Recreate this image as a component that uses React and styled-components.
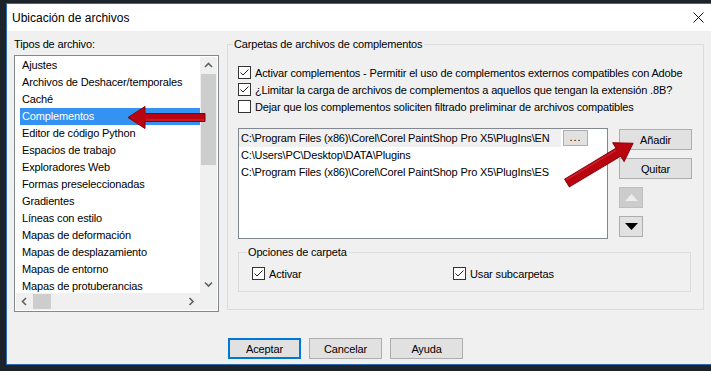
import React from 'react'
import styled, { createGlobalStyle } from 'styled-components'

const GlobalStyle = createGlobalStyle`
  html, body {
    margin: 0;
    padding: 0;
    overflow: hidden;
    background: #1d232b;
  }
  body {
    font-family: "Liberation Sans", Arial, sans-serif;
    font-size: 11px;
    letter-spacing: -0.15px;
    color: #000;
  }
  * { box-sizing: border-box; }
`

const fileTypes = [
    'Ajustes',
    'Archivos de Deshacer/temporales',
    'Caché',
    'Complementos',
    'Editor de código Python',
    'Espacios de trabajo',
    'Exploradores Web',
    'Formas preseleccionadas',
    'Gradientes',
    'Líneas con estilo',
    'Mapas de deformación',
    'Mapas de desplazamiento',
    'Mapas de entorno',
    'Mapas de protuberancias',
]

const paths = [
    'C:\\Program Files (x86)\\Corel\\Corel PaintShop Pro X5\\PlugIns\\EN',
    'C:\\Users\\PC\\Desktop\\DATA\\Plugins',
    'C:\\Program Files (x86)\\Corel\\Corel PaintShop Pro X5\\PlugIns\\ES',
]

const Check = ({ checked }) => (
    <Box>
        {checked && (
            <svg width="11" height="11" viewBox="0 0 11 11">
                <path d="M1.5 5.5 L4 8 L9.5 2.5" fill="none" stroke="#222" strokeWidth="1" />
            </svg>
        )}
    </Box>
)

const Chevron = ({ dir }) => {
    const d = {
        up: 'M1 5 L4.5 1.5 L8 5',
        down: 'M1 1.5 L4.5 5 L8 1.5',
        left: 'M5 1 L1.5 4.5 L5 8',
        right: 'M1.5 1 L5 4.5 L1.5 8',
    }[dir]
    const w = dir === 'up' || dir === 'down' ? 9 : 7
    const h = dir === 'up' || dir === 'down' ? 7 : 9
    return (
        <svg width={w} height={h} viewBox={`0 0 ${w} ${h}`}>
            <path d={d} fill="none" stroke="#606060" strokeWidth="1.6" />
        </svg>
    )
}

// arrow drawn pointing right from (0,0), then rotated into place
const RedArrow = ({ x, y, angle, len, shaft = 4 }) => {
    const s = shaft, hw = 11, hl = 17
    const pts = `0,${-s} ${len - hl},${-s} ${len - hl},${-hw} ${len},0 ${len - hl},${hw} ${len - hl},${s} 0,${s}`
    return (
        <g transform={`translate(${x} ${y}) rotate(${angle})`}>
            <polygon points={pts} fill="#b8050f" stroke="#8c0009" strokeWidth="1" strokeLinejoin="round" />
            <line x1="1" y1={-s + 1.5} x2={len - hl - 1} y2={-s + 1.5} stroke="#d0202a" strokeWidth="1.5" />
        </g>
    )
}

const App = () => {
    return (
        <>
            <GlobalStyle />
            <Screen>
                <Window>
                    <TitleBar>
                        <span>Ubicación de archivos</span>
                        <svg width="11" height="11" viewBox="0 0 11 11">
                            <path d="M0.5 0.5 L10.5 10.5 M10.5 0.5 L0.5 10.5" stroke="#111" strokeWidth="1" />
                        </svg>
                    </TitleBar>
                    <Body>
                        <LeftColumn>
                            <Label>Tipos de archivo:</Label>
                            <ListBox>
                                <Items>
                                    {fileTypes.map((t) => (
                                        <Item key={t} $selected={t === 'Complementos'}>{t}</Item>
                                    ))}
                                </Items>
                                <VScroll>
                                    <ArrowCell><Chevron dir="up" /></ArrowCell>
                                    <VThumb />
                                    <ArrowCell><Chevron dir="down" /></ArrowCell>
                                </VScroll>
                                <HScroll>
                                    <ArrowCell><Chevron dir="left" /></ArrowCell>
                                    <HThumb />
                                    <ArrowCell><Chevron dir="right" /></ArrowCell>
                                </HScroll>
                                <Corner />
                            </ListBox>
                        </LeftColumn>

                        <GroupBox $width={477}>
                            <Legend $left={5}>Carpetas de archivos de complementos</Legend>
                            <GroupInner>
                                <CheckRow><Check checked />Activar complementos - Permitir el uso de complementos externos compatibles con Adobe</CheckRow>
                                <CheckRow><Check checked />¿Limitar la carga de archivos de complementos a aquellos que tengan la extensión .8B?</CheckRow>
                                <CheckRow><Check />Dejar que los complementos soliciten filtrado preliminar de archivos compatibles</CheckRow>

                                <PathArea>
                                    <PathList>
                                        {paths.map((p, i) => (
                                            <PathRow key={i} $edit={i === 0}>
                                                <PathText $edit={i === 0}>{p}</PathText>
                                                {i === 0 && <DotsButton>...</DotsButton>}
                                            </PathRow>
                                        ))}
                                    </PathList>
                                    <SideButtons>
                                        <Button>Añadir</Button>
                                        <Button>Quitar</Button>
                                        <MoveButton $disabled>
                                            <svg width="13" height="7" viewBox="0 0 13 7"><polygon points="0,7 6.5,0 13,7" fill="#ececec" /></svg>
                                        </MoveButton>
                                        <MoveButton>
                                            <svg width="13" height="7" viewBox="0 0 13 7"><polygon points="0,0 13,0 6.5,7" fill="#000" /></svg>
                                        </MoveButton>
                                    </SideButtons>
                                </PathArea>

                                <SubGroup $width={453}>
                                    <Legend $left={8}>Opciones de carpeta</Legend>
                                    <OptionsGrid>
                                        <CheckRow><Check checked />Activar</CheckRow>
                                        <CheckRow><Check checked />Usar subcarpetas</CheckRow>
                                    </OptionsGrid>
                                </SubGroup>
                            </GroupInner>
                        </GroupBox>

                        <Footer>
                            <Button $default>Aceptar</Button>
                            <Button>Cancelar</Button>
                            <Button>Ayuda</Button>
                        </Footer>
                    </Body>
                </Window>
                <Overlay width="711" height="371" viewBox="0 0 711 371">
                    <RedArrow x={205} y={117.5} angle={180} len={77} />
                    <RedArrow x={567} y={183} angle={-31} len={77} shaft={4.5} />
                </Overlay>
            </Screen>
        </>
    )
}

export default App

const Screen = styled.div`
    position: relative;
    width: 711px;
    height: 371px;
    padding: 3px 0 0 6px;
    overflow: hidden;
`

const Window = styled.div`
    width: 716px;
    height: 362px;
    border: 1px solid #2b6cb0;
    border-right: none;
    background: #f0f0f0;
    display: flex;
    flex-direction: column;
`

const TitleBar = styled.div`
    height: 27px;
    flex-shrink: 0;
    background: #fff;
    display: flex;
    align-items: center;
    justify-content: space-between;
    padding: 0 18px 0 5px;
    font-size: 12px;
    letter-spacing: 0;
`

const Body = styled.div`
    flex: 1;
    display: grid;
    grid-template-columns: 205px 477px;
    grid-template-rows: auto auto;
    align-content: start;
    align-items: start;
    column-gap: 8px;
    padding: 5px 0 0 7px;
`

const LeftColumn = styled.div`
    display: flex;
    flex-direction: column;
`

const Label = styled.div`
    line-height: 16px;
    height: 16px;
    margin-bottom: 3px;
`

const ListBox = styled.div`
    width: 205px;
    height: 257px;
    border: 1px solid #828790;
    background: #fff;
    padding: 1px;
    display: grid;
    grid-template-columns: 184px 17px;
    grid-template-rows: 236px 17px;
`

const Items = styled.div`
    overflow: hidden;
`

const Item = styled.div`
    height: 17px;
    line-height: 17px;
    margin-left: 4px;
    padding-left: 2px;
    white-space: nowrap;
    background: ${props => props.$selected ? '#3392f2' : 'transparent'};
    color: ${props => props.$selected ? '#fff' : '#000'};
`

const VScroll = styled.div`
    background: #f0f0f0;
    display: flex;
    flex-direction: column;
`

const HScroll = styled.div`
    background: #f0f0f0;
    display: flex;
`

const ArrowCell = styled.div`
    width: 17px;
    height: 17px;
    flex-shrink: 0;
    display: flex;
    align-items: center;
    justify-content: center;
    &:last-child { margin-left: auto; margin-top: auto; }
`

const VThumb = styled.div`
    height: 91px;
    margin: 0 1px;
    background: #cdcdcd;
`

const HThumb = styled.div`
    width: 18px;
    margin: 1px 0;
    background: #cdcdcd;
`

const Corner = styled.div`
    background: #f0f0f0;
`

const GroupBox = styled.div`
    width: ${props => props.$width}px;
    margin-top: 8px;
    border: 1px solid #dcdcdc;
`

const Legend = styled.div`
    width: fit-content;
    margin: -9px 0 0 ${props => props.$left}px;
    padding: 0 2px 0 1px;
    line-height: 16px;
    height: 16px;
    background: #f0f0f0;
`

const GroupInner = styled.div`
    padding: 12px 0 17px 10px;
`

const CheckRow = styled.div`
    display: flex;
    align-items: center;
    height: 17px;
    white-space: nowrap;
    gap: 4px;
`

const Box = styled.span`
    width: 13px;
    height: 13px;
    flex-shrink: 0;
    border: 1px solid #333;
    background: #fff;
    display: flex;
    align-items: center;
    justify-content: center;
`

const PathArea = styled.div`
    display: flex;
    gap: 11px;
    margin-top: 13px;
`

const PathList = styled.div`
    width: 370px;
    height: 111px;
    border: 1px solid #828790;
    background: #fff;
`

const PathRow = styled.div`
    display: flex;
    align-items: center;
    height: ${props => props.$edit ? '18px' : '17px'};
`

const PathText = styled.div`
    width: ${props => props.$edit ? '322px' : 'auto'};
    height: 100%;
    line-height: ${props => props.$edit ? '19px' : '17px'};
    padding-left: 2px;
    white-space: nowrap;
    overflow: hidden;
    background: ${props => props.$edit ? '#f0f0f0' : 'transparent'};
`

const DotsButton = styled.div`
    width: 25px;
    height: 16px;
    margin-left: 2px;
    border: 1px solid #adadad;
    background: #e1e1e1;
    font-size: 11px;
    line-height: 12px;
    letter-spacing: 1px;
    text-align: center;
`

const SideButtons = styled.div`
    display: flex;
    flex-direction: column;
    gap: 8px;
    padding-top: 1px;
`

const Button = styled.div`
    width: 73px;
    height: 21px;
    border: ${props => props.$default ? '2px solid #0078d7' : '1px solid #adadad'};
    background: #e1e1e1;
    display: flex;
    align-items: center;
    justify-content: center;
`

const MoveButton = styled.div`
    width: 24px;
    height: 21px;
    border: 1px solid ${props => props.$disabled ? '#bfbfbf' : '#adadad'};
    background: ${props => props.$disabled ? '#cccccc' : '#e1e1e1'};
    display: flex;
    align-items: center;
    justify-content: center;
`

const SubGroup = styled(GroupBox)`
    margin-top: 13px;
`

const OptionsGrid = styled.div`
    display: grid;
    grid-template-columns: 201px 1fr;
    padding: 5px 0 9px 13px;
`

const Footer = styled.div`
    grid-column: 2;
    display: flex;
    gap: 8px;
    margin: 26px 0 0 1px;
`

const Overlay = styled.svg`
    position: absolute;
    left: 0;
    top: 0;
    pointer-events: none;
`
